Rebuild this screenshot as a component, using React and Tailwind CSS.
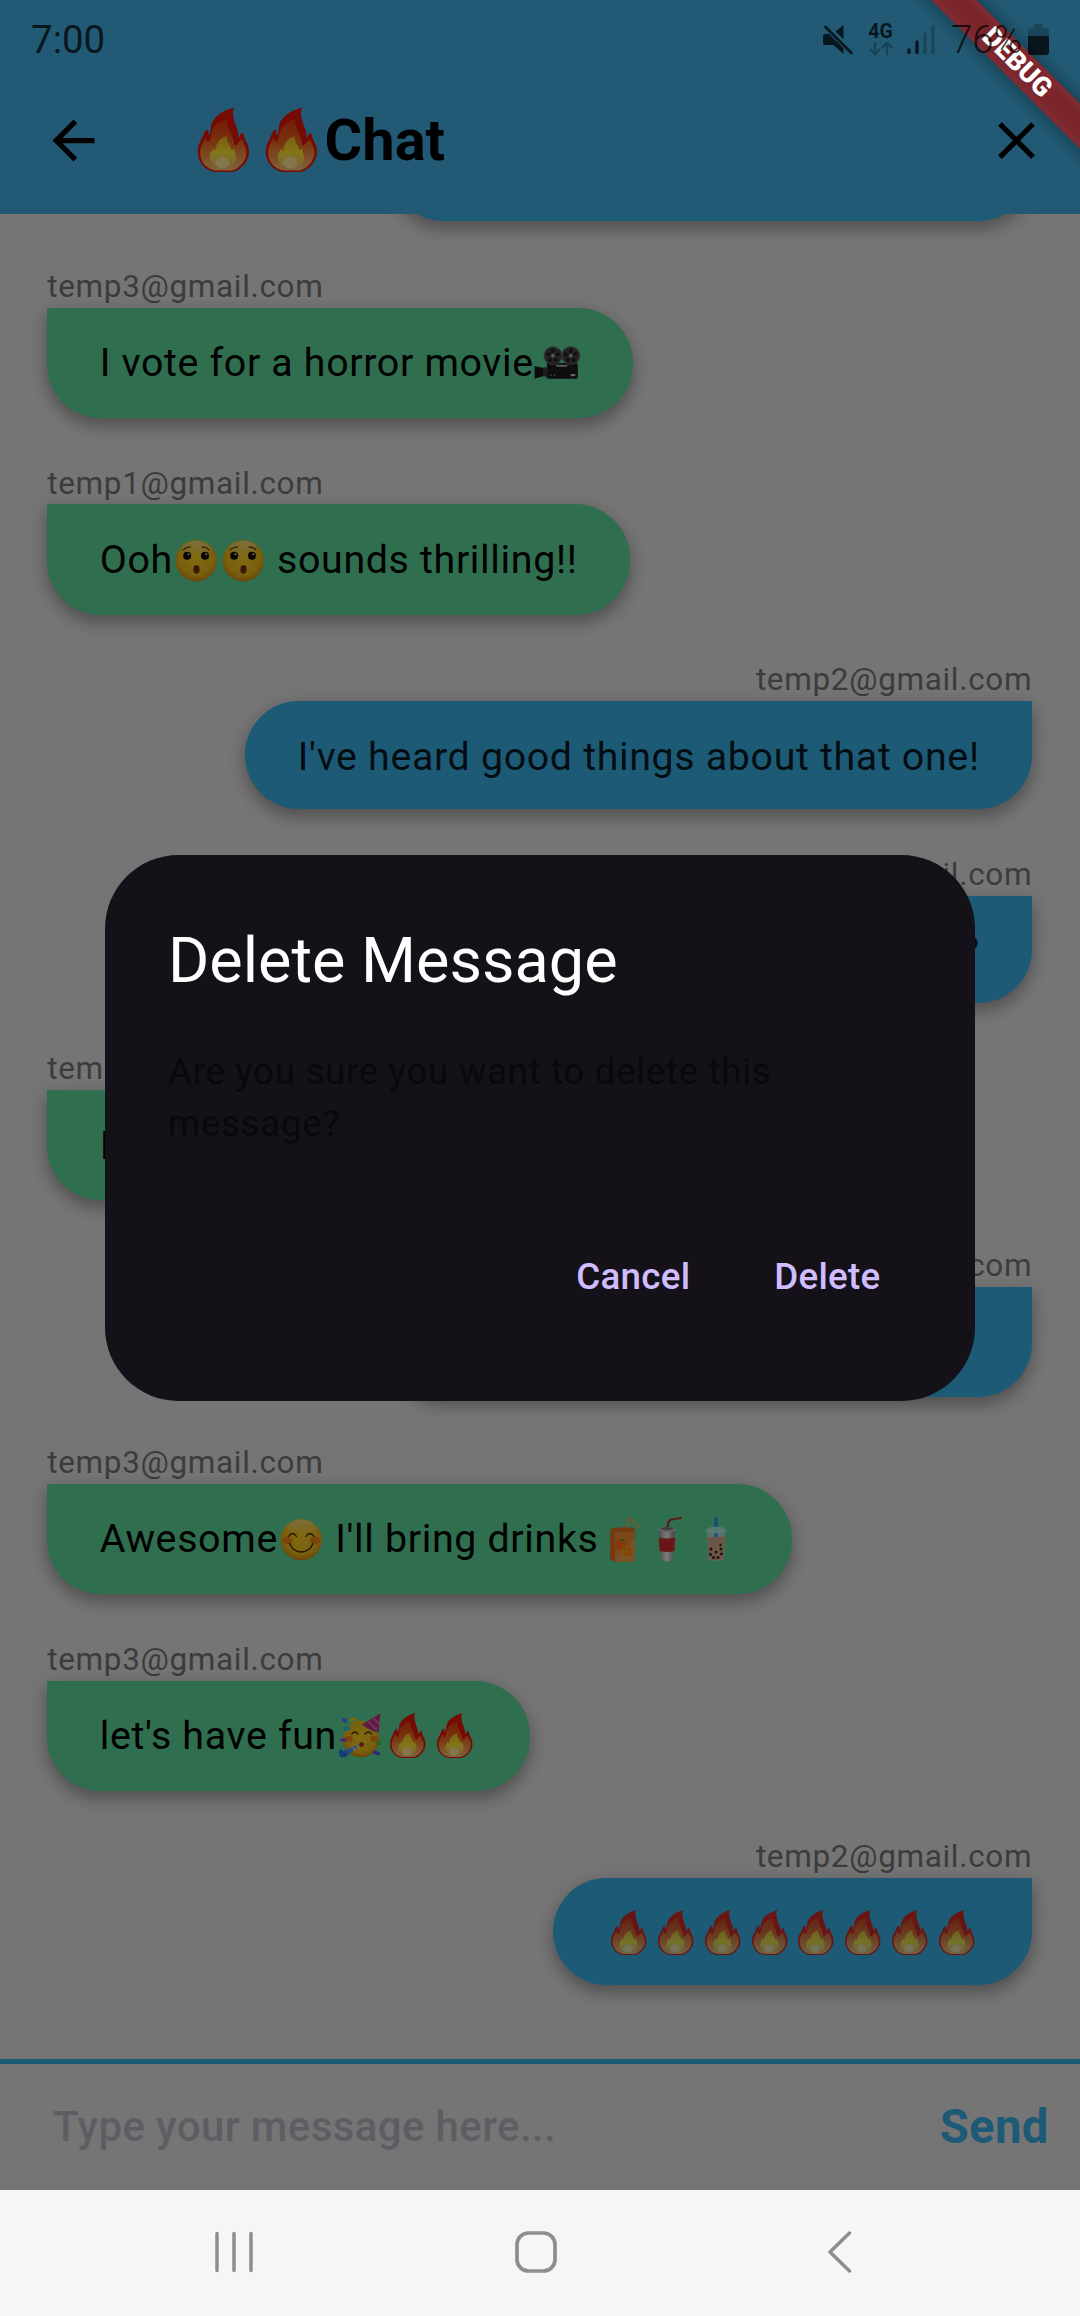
import React from "react";

function EmojiDefs() {
  return (
    <svg className="absolute h-0 w-0" aria-hidden="true">
      <defs>
        <linearGradient id="flame" x1="0" y1="0" x2="0" y2="1">
          <stop offset="0" stopColor="#751d06" />
          <stop offset="0.45" stopColor="#783410" />
          <stop offset="1" stopColor="#80623a" />
        </linearGradient>
        <linearGradient id="flameMid" x1="0" y1="0" x2="0" y2="1">
          <stop offset="0" stopColor="#7b5f12" />
          <stop offset="0.5" stopColor="#827618" />
          <stop offset="1" stopColor="#7c6238" />
        </linearGradient>
        <radialGradient id="face" cx="0.5" cy="0.42" r="0.6">
          <stop offset="0" stopColor="#806b12" />
          <stop offset="0.7" stopColor="#78600f" />
          <stop offset="0.9" stopColor="#714c0b" />
          <stop offset="1" stopColor="#5a3b0a" />
        </radialGradient>
        <linearGradient id="gloss" x1="0" y1="0" x2="0" y2="1">
          <stop offset="0" stopColor="#7c7248" stopOpacity="0.8" />
          <stop offset="1" stopColor="#7c7248" stopOpacity="0" />
        </linearGradient>
        <linearGradient id="cup" x1="0" x2="1">
          <stop offset="0" stopColor="#4c4c4e" />
          <stop offset="0.5" stopColor="#7c7c7c" />
          <stop offset="1" stopColor="#444446" />
        </linearGradient>
      </defs>
    </svg>
  );
}

function Emoji({ label, big, children }) {
  return (
    <svg
      role="img"
      aria-label={label}
      viewBox="0 0 46.84 46"
      className={
        big
          ? "inline-block h-[66.5px] w-[67.75px] align-[-14px]"
          : "inline-block h-[46px] w-[46.84px] align-[-10px]"
      }
    >
      {children}
    </svg>
  );
}

function Fire({ big }) {
  return (
    <Emoji label="fire" big={big}>
      <path d="M31.4.3C30 2.500 30.200 5 30.900 8C31.800 12.500 34.300 15.500 34.400 21.500C35.300 20.500 35 18.600 36.900 18.100C38.300 18 37.800 19.500 38.300 21C39.200 24 41.500 26 41.500 31.500C41.300 38 35.500 44 30 45H18C11.500 44.200 6 38.500 6 31C6 25 9.200 22.500 10.200 18.500C10.700 16.800 12 15.800 13.300 15.600C13.600 17 13 18.500 14 19.500C15.200 17 14.600 14.500 15.600 11.500C17.600 5.800 25 1.600 31.400.3Z" fill="#750b04" />
      <path d="M26.500 8.500C25.600 14.500 30.300 18 31.300 26C32.600 27.200 33.500 25.500 34.500 24.200C35.300 23 36.300 22.600 37 22.700C37.500 26 40 27.800 39.700 32C39.200 38.500 34 42.800 29.500 43.900H18C12 42.800 7.800 38 7.700 32C7.600 27 10 24.500 11.300 21.200C11.800 22.500 12.700 24 14 23.800C16 20.500 14.800 17.500 17 14.500C19.200 11.300 22.500 9.300 26.500 8.500Z" fill="url(#flame)" />
      <path d="M26.400 20.300C25.500 24.500 29 26.300 29.300 30C30.500 30 30.600 28.400 31.500 28.800C31.200 31.500 33 33 32.500 36C31.700 40.200 28 42.500 24 42.500C18.500 42.500 14.500 39.500 14.300 35C14.200 31.800 16 30.700 16.300 28.800C17 29.300 17.500 30 18.200 30C18.700 25 21.500 21 26.400 20.300Z" fill="url(#flameMid)" />
      <ellipse cx="23" cy="38.500" rx="4.800" ry="4.300" fill="#84764f" />
    </Emoji>
  );
}

function Camera() {
  return (
    <Emoji label="movie camera">
      <path d="M13 23H42Q43.800 23 43.800 25V37Q43.800 38.800 42 38.800H14.500Q12.500 38.800 12.500 37Z" fill="#0e0e0f" />
      <path d="M.6 26L9.500 28V36L.6 38.800Z" fill="#0b0b0c" />
      <rect x="9" y="27.500" width="4.500" height="9" fill="#1c1c1d" />
      <g fill="#232325" stroke="#333335" strokeWidth="0.800">
        <circle cx="19" cy="15.700" r="9" />
        <circle cx="36.800" cy="15.700" r="9" />
      </g>
      <g fill="#101011">
        <circle cx="19" cy="10.700" r="2" /><circle cx="14.300" cy="14.200" r="2" /><circle cx="16" cy="20" r="2" /><circle cx="22" cy="20" r="2" /><circle cx="23.700" cy="14.200" r="2" />
        <circle cx="36.800" cy="10.700" r="2" /><circle cx="32" cy="14.200" r="2" /><circle cx="33.800" cy="20" r="2" /><circle cx="39.800" cy="20" r="2" /><circle cx="41.500" cy="14.200" r="2" />
      </g>
      <circle cx="19" cy="15.700" r="1.700" fill="#5c5c5c" />
      <circle cx="36.800" cy="15.700" r="1.700" fill="#5c5c5c" />
      <rect x="22" y="24.800" width="11.500" height="2" rx="1" fill="#5a5a5a" />
      <rect x="36.500" y="34" width="5" height="2.200" rx="1" fill="#666" />
      <path d="M17 34.500v1.500M20.500 34.500v1.500" stroke="#555" strokeWidth="1" />
    </Emoji>
  );
}

function Hushed() {
  return (
    <Emoji label="hushed face">
      <circle cx="23.200" cy="23.700" r="20.700" fill="url(#face)" />
      <ellipse cx="23.200" cy="12" rx="14" ry="8" fill="url(#gloss)" />
      <circle cx="14.200" cy="18.700" r="4" fill="#0a0702" />
      <circle cx="32" cy="18.700" r="4" fill="#0a0702" />
      <circle cx="15.500" cy="17.200" r="1" fill="#777" />
      <circle cx="33.300" cy="17.200" r="1" fill="#777" />
      <path d="M10.500 12.800Q13 9.700 17.300 10.200M29 10.200Q33.500 9.700 36 12.800" fill="none" stroke="#2d1c05" strokeWidth="1.200" strokeLinecap="round" />
      <ellipse cx="23.500" cy="32.400" rx="3.100" ry="4.200" fill="#3d1505" />
    </Emoji>
  );
}

function Blush() {
  return (
    <Emoji label="smiling face">
      <circle cx="23.200" cy="23.700" r="20.700" fill="url(#face)" />
      <ellipse cx="23.200" cy="11.500" rx="14" ry="8" fill="url(#gloss)" />
      <ellipse cx="9.500" cy="24.500" rx="5" ry="4" fill="#7c3a0c" opacity="0.700" />
      <ellipse cx="37" cy="24.500" rx="5" ry="4" fill="#7c3a0c" opacity="0.700" />
      <path d="M10.500 20.500Q14.500 14.500 18.500 20.500M28 20.500Q32 14.500 36 20.500M11.500 27.500Q15 36 23.200 36Q31.500 36 35 27.500" fill="none" stroke="#241603" strokeWidth="1.300" strokeLinecap="round" />
    </Emoji>
  );
}

function Juice() {
  return (
    <Emoji label="beverage box">
      <path d="M26.500 12L30 2L41.500 11.500" fill="none" stroke="#7a5a26" strokeWidth="1.700" strokeLinejoin="round" />
      <path d="M11 13.500L16 11.500H35.700V45.800H16L11 43.500Z" fill="#733a10" />
      <path d="M16 15.500H35.700V45.800H16Z" fill="#7a481a" />
      <path d="M35.700 22L28 32L16 42V45.800H35.700Z" fill="#775429" />
      <circle cx="21.500" cy="28.500" r="5.300" fill="#87380a" />
      <circle cx="28.500" cy="36" r="6" fill="#855012" />
      <circle cx="28.500" cy="36" r="4.300" fill="#7e4208" />
      <path d="M28.500 32V40M24.500 36H32.500" stroke="#855f22" strokeWidth="0.700" />
      <path d="M20.500 24Q22 21.500 25.500 24Q23 26 20.500 24Z" fill="#2e4a12" />
    </Emoji>
  );
}

function Soda() {
  return (
    <Emoji label="cup with straw">
      <path d="M22.300 13L23.300 7Q23.800 4 27 3.500L35.800 2" fill="none" stroke="#5a1d16" strokeWidth="2.200" strokeLinecap="round" />
      <path d="M14 15H29.800L27.600 44Q22 46.500 16.400 44Z" fill="url(#cup)" />
      <path d="M13.600 21.500Q22 23.500 30.300 21.500L29.300 35Q22 37 14.700 35Z" fill="#6b1519" />
      <ellipse cx="21.900" cy="13.500" rx="9.500" ry="2.500" fill="#5f6062" />
      <ellipse cx="21.900" cy="12.500" rx="6.500" ry="1.300" fill="#3c3d3f" />
    </Emoji>
  );
}

function Boba() {
  return (
    <Emoji label="bubble tea">
      <path d="M15 16H33.300L32 43.500Q24 46 16.500 43.500Z" fill="#587068" />
      <path d="M15.300 21H33L31.800 43Q24 45.500 16.700 43Z" fill="#6b5648" />
      <rect x="22.200" y="1" width="3.300" height="20" fill="#115178" />
      <path d="M16 12Q24 9.500 32.500 12L34.800 15.500Q24 19.500 13.200 15.500Z" fill="#64807c" opacity="0.750" />
      <g fill="#1f120e">
        <circle cx="19" cy="33" r="1.500" /><circle cx="24" cy="36" r="1.500" /><circle cx="29" cy="33" r="1.500" /><circle cx="18.500" cy="38.500" r="1.500" /><circle cx="29.500" cy="38" r="1.500" /><circle cx="21.500" cy="41.500" r="1.500" /><circle cx="26" cy="41.500" r="1.500" /><circle cx="28.500" cy="29" r="1.200" />
      </g>
    </Emoji>
  );
}

function Party() {
  return (
    <Emoji label="partying face">
      <circle cx="24" cy="26" r="18.300" fill="url(#face)" />
      <path d="M16 9Q12 5 17 6Q20 6 20 9" fill="none" stroke="#80680f" strokeWidth="2" />
      <path d="M25 11.500L43.300.3L41.700 19.500Q34 18.500 25 11.500Z" fill="#601b41" />
      <path d="M36 5L42.500 11M31 8.500L40 17" stroke="#7d3963" strokeWidth="1.500" />
      <path d="M14.500 21.500Q18 16.500 21.500 21.500M27.500 21.500Q31.500 16.500 35 21.500" fill="none" stroke="#241603" strokeWidth="1.300" />
      <ellipse cx="12" cy="26" rx="4" ry="3" fill="#7c3a0c" opacity="0.700" />
      <ellipse cx="37" cy="26" rx="4" ry="3" fill="#7c3a0c" opacity="0.700" />
      <circle cx="24.500" cy="31.500" r="2.300" fill="#5b1210" />
      <path d="M24 31L11 42L7.500 37Z" fill="#244f85" />
      <path d="M11 42Q7 46.500 2.500 43Q1 38 3.500 35.500Q5 39 8.500 37.500Z" fill="#153c76" />
      <path d="M20 32.500L21.500 35M16 34.500L18 37.500" stroke="#7a7d85" strokeWidth="1.200" />
      <g>
        <rect x="5" y="5" width="5" height="4" rx="1" fill="#253e80" transform="rotate(35 7 7)" />
        <rect x="7" y="13.500" width="6" height="4" rx="1" fill="#196174" transform="rotate(-20 10 15)" />
        <rect x="3.500" y="25.500" width="6" height="3" rx="1" fill="#502072" />
        <rect x="39" y="28.500" width="5" height="4" rx="1" fill="#206a20" transform="rotate(-20 41 30)" />
        <rect x="36" y="38" width="7" height="3.500" rx="1" fill="#282b7c" transform="rotate(20 39 40)" />
      </g>
    </Emoji>
  );
}

const shadow =
  "shadow-[0_8px_15px_rgba(0,0,0,0.25),0_3px_20px_rgba(0,0,0,0.1)]";

function Message({ from, mine, tall, wide, children }) {
  const side = mine
    ? "rounded-tl-[54px] bg-[#1c5a76] text-black/85"
    : "rounded-tr-[55px] bg-[#2f6f50] text-black";
  return (
    <div className={`mt-[47.9px] flex flex-col ${mine ? "items-end" : "items-start"}`}>
      <div className="pb-[2.9px] text-[31.5px] leading-[36px] tracking-[0.656px] text-[#3c3c3c]">
        {from}
      </div>
      <div
        className={`${side} ${shadow} ${tall ? "h-[110.1px]" : "h-[107.6px]"} ${wide ? "w-[642px]" : ""} rounded-b-[54px] px-[52.5px] pt-[32.5px] text-right text-[39.375px] leading-[46px] tracking-[0.656px] whitespace-pre`}
      >
        {children}
      </div>
    </div>
  );
}

function StatusBar() {
  return (
    <div className="relative z-30 flex h-[67px] items-start text-[38.5px] leading-[46px] text-black/75">
      <span className="mt-[17px] ml-[31px] grow">7:00</span>
      <svg className="mt-[24px] mr-[14px] h-[32px] w-[32px]" viewBox="0 0 32 32" fill="currentColor">
        <path d="M21.500 1V15L13.500 7.500ZM1 12Q1 10 3 10H7L21.500 24V30L11.500 21H3Q1 21 1 19Z" />
        <path d="M3.500 3L29.500 29" stroke="currentColor" strokeWidth="2.600" strokeLinecap="round" />
      </svg>
      <span className="mt-[23px] mr-[14px] flex w-[25px] flex-col items-center">
        <span className="text-[19.5px] leading-[18px] font-bold">4G</span>
        <svg className="h-[15px] w-[24px] opacity-35" viewBox="0 0 24 15" fill="none" stroke="currentColor" strokeWidth="2.400">
          <path d="M6 1V13M1 8L6 13L11 8M18 14V2M13 7L18 2L23 7" />
        </svg>
      </span>
      <svg className="mt-[24px] mr-[15px] h-[32px] w-[29px]" viewBox="0 0 29 32" stroke="currentColor" strokeWidth="3.400" strokeLinecap="round">
        <path d="M2 26V28.500M10 18V28.500" />
        <path d="M18 10V28.500M26 3V28.500" opacity="0.300" />
      </svg>
      <span className="mt-[17px] mr-[7px] w-[70px] font-light whitespace-nowrap">76%</span>
      <svg className="mt-[23px] mr-[31px] h-[32px] w-[21px]" viewBox="0 0 21 32" fill="currentColor">
        <path d="M0 13V8Q0 5 3 5H6V2.500Q6 .5 8 .5H13Q15 .5 15 2.500V5H18Q21 5 21 8V13Z" opacity="0.300" />
        <path d="M0 13H21V29Q21 32 18 32H3Q0 32 0 29Z" />
      </svg>
    </div>
  );
}

function AppBar() {
  return (
    <div className="flex h-[147px] items-center">
      <div className="flex w-[189px]">
        <svg className="ml-[42px] h-[63px] w-[63px]" viewBox="0 0 24 24">
          <path d="M20 11H7.830l5.590-5.590L12 4l-8 8 8 8 1.410-1.410L7.830 13H20v-2z" />
        </svg>
      </div>
      <div className="-mt-[2px] grow text-[57.75px] leading-[68px] font-bold whitespace-nowrap text-black">
        <Fire big />
        <Fire big />
        Chat
      </div>
      <svg className="mr-[32px] h-[63px] w-[63px]" viewBox="0 0 24 24">
        <path d="M19 6.410L17.590 5 12 10.590 6.410 5 5 6.410 10.590 12 5 17.590 6.410 19 12 13.410 17.590 19 19 17.590 13.410 12z" />
      </svg>
    </div>
  );
}

function DebugBanner() {
  return (
    <div className="pointer-events-none absolute top-0 right-0 z-20 h-[220px] w-[220px] overflow-hidden">
      <div className="absolute top-[47.25px] left-[7px] h-[31.5px] w-[300px] rotate-45 bg-black/45 blur-[9px]" />
      <div className="absolute top-[47.25px] left-[7px] flex h-[31.5px] w-[300px] rotate-45 items-center justify-center bg-[#b71c1c]/63 text-[26.8px] leading-[31.5px] font-black text-white">
        DEBUG
      </div>
    </div>
  );
}

function DeleteDialog() {
  return (
    <div className="absolute top-[855.3px] left-[105px] z-10 w-[870px] rounded-[73.5px] bg-[#141218] px-[63px] pt-[64px] pb-[62px]">
      <h1 className="text-[63px] leading-[84px] text-white">Delete Message</h1>
      <p className="mt-[42.5px] text-[36.75px] leading-[52.5px] tracking-[0.656px] text-[#09080b]">
        Are you sure you want to delete this
        <br />
        message?
      </p>
      <div className="mt-[62.500px] flex h-[126px] items-center justify-end gap-[21px] text-[36.75px] font-medium tracking-[0.26px] text-[#d0bcff]">
        <button className="px-[31.5px]">Cancel</button>
        <button className="px-[31.5px]">Delete</button>
      </div>
    </div>
  );
}

export default function App() {
  return (
    <div className="relative flex h-[2316px] w-[1080px] flex-col overflow-hidden bg-[#757575] font-[Roboto,sans-serif]">
      <EmojiDefs />
      <header className="h-[214px] shrink-0 bg-[#225a75]">
        <StatusBar />
        <AppBar />
      </header>

      <main className="flex min-h-0 grow flex-col justify-end overflow-hidden pr-[47.8px] pb-[73.8px] pl-[47.2px]">
        <Message from="temp2@gmail.com" mine wide />
        <Message from="temp3@gmail.com" tall>I vote for a horror movie<Camera /></Message>
        <Message from="temp1@gmail.com" tall>Ooh<Hushed /><Hushed /> sounds thrilling!!</Message>
        <Message from="temp2@gmail.com" mine>I've heard good things about that one!</Message>
        <Message from="temp2@gmail.com" mine>?</Message>
        <Message from="temp1@gmail.com" tall>I</Message>
        <Message from="temp2@gmail.com" mine tall wide />
        <Message from="temp3@gmail.com" tall>Awesome<Blush /> I'll bring drinks<Juice /><Soda /><Boba /></Message>
        <Message from="temp3@gmail.com" tall>let's have fun<Party /><Fire /><Fire /></Message>
        <Message from="temp2@gmail.com" mine>
          <span className="opacity-85">
            <Fire /><Fire /><Fire /><Fire /><Fire /><Fire /><Fire /><Fire />
          </span>
        </Message>
      </main>

      <div className="flex h-[131px] shrink-0 items-center border-t-[5px] border-[#1c5a76] pr-[31.5px] pl-[53px]">
        <span className="-mt-[2px] grow text-[42px] font-medium tracking-[0.39px] text-[#5f5d63]">Type your message here...</span>
        <span className="text-[47.25px] font-bold tracking-[0.26px] text-[#1c5a76]">Send</span>
      </div>

      <nav className="flex h-[126px] shrink-0 items-center bg-[#f6f6f6] pb-[2px] text-[#8e8e8e]">
        <svg className="ml-[214px] h-[42px] w-[40px]" viewBox="0 0 40 42" stroke="currentColor" strokeWidth="3.500" strokeLinecap="round">
          <path d="M3 2.500V39.500M20 2.500V39.500M37 2.500V39.500" />
        </svg>
        <svg className="ml-[261px] h-[42px] w-[42px]" viewBox="0 0 42 42" fill="none" stroke="currentColor" strokeWidth="3.700">
          <rect x="2" y="2" width="38" height="38" rx="11.500" />
        </svg>
        <svg className="ml-[270px] h-[42px] w-[26px]" viewBox="0 0 26 42" fill="none" stroke="currentColor" strokeWidth="3.400" strokeLinecap="round" strokeLinejoin="round">
          <path d="M22.500 2L3 21L22.500 40" />
        </svg>
      </nav>

      <DeleteDialog />
      <DebugBanner />
    </div>
  );
}
